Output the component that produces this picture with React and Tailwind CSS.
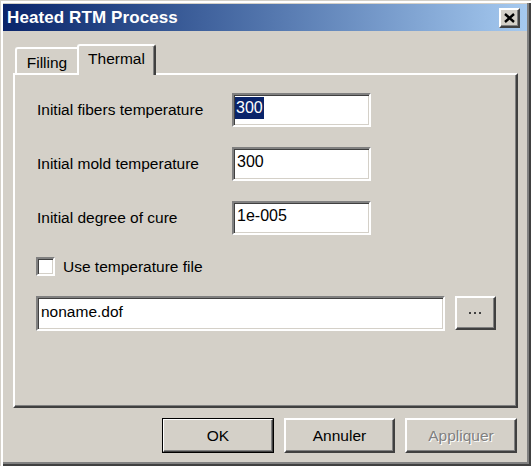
import React, { useState } from "react";

const raised =
  "border-2 border-t-white border-l-white border-r-[#404040] border-b-[#404040] shadow-[inset_-1px_-1px_0_0_#808080]";
const sunken =
  "border-2 border-t-[#808080] border-l-[#808080] border-r-white border-b-white shadow-[inset_1px_1px_0_0_#404040,inset_-1px_-1px_0_0_#d4d0c8]";

const Field = ({ label, value, selected }) => (
  <div className="flex items-center h-[34px]">
    <div className="w-[195px] pl-[22px] box-content text-[15.5px]">{label}</div>
    <div className={`${sunken} bg-white w-[139px] h-[34px] flex items-start pt-[2px] pl-[1px]`}>
      {selected ? (
        <span className="bg-[#0a246a] text-white leading-[22px] px-[1px]">{value}</span>
      ) : (
        <span className="leading-[22px] px-[2px]">{value}</span>
      )}
    </div>
  </div>
);

const Button = ({ children, isDefault, disabled, width = "w-[112px]" }) => (
  <button
    type="button"
    disabled={disabled}
    className={`${width} h-[35px] bg-[#d4d0c8] flex items-center justify-center text-[15.5px] ${
      isDefault ? "outline outline-1 outline-black -outline-offset-1" : ""
    } ${raised}`}
  >
    <span
      className={
        disabled
          ? "text-[#808080] [text-shadow:1px_1px_0_#ffffff]"
          : "text-black"
      }
    >
      {children}
    </span>
  </button>
);

export default function App() {
  const [useFile, setUseFile] = useState(false);

  return (
    <div
      className="w-[531px] h-[466px] bg-[#d4d0c8] flex flex-col pt-[4px] pl-[3px] pr-[4px] pb-[4px] text-black shadow-[inset_1px_1px_0_0_#d4d0c8,inset_3px_3px_0_0_#ffffff,inset_-2px_-2px_0_0_#404040,inset_-4px_-4px_0_0_#808080]"
      style={{ fontFamily: '"Liberation Sans", Arial, sans-serif' }}
    >
      {/* title bar */}
      <div className="h-[27px] flex items-center justify-between pl-[4px] pr-[7px] bg-gradient-to-r from-[#0a246a] to-[#a6caf0]">
        <span className="text-white font-bold text-[17px] tracking-[0.1px]">Heated RTM Process</span>
        <div className={`${raised} w-[21px] h-[20px] bg-[#d4d0c8] flex items-center justify-center`}>
          <svg width="11" height="10" viewBox="0 0 11 10">
            <path d="M1 1 L10 9 M10 1 L1 9" stroke="#000" strokeWidth="2.4" />
          </svg>
        </div>
      </div>

      {/* tabs */}
      <div className="mt-[13px] ml-[10px] mr-[9px] flex flex-col">
        <div className="flex items-end h-[29px] pl-[2px]">
          <div className="w-[62px] h-[26px] border-t-2 border-l-2 border-white rounded-tl-[3px] flex items-center justify-center pt-[3px] text-[15.5px]">
            Filling
          </div>
          <div className="relative z-10 w-[79px] h-[31px] -mb-[2px] bg-[#d4d0c8] border-t-2 border-l-2 border-r-2 border-t-white border-l-white border-r-[#404040] rounded-t-[3px] flex items-start justify-center pt-[1px] text-[15.5px] shadow-[inset_-1px_0_0_0_#808080]">
            Thermal
          </div>
        </div>

        {/* panel */}
        <div className="h-[335px] border-2 border-t-white border-l-white border-r-[#404040] border-b-[#404040] shadow-[inset_-1px_-1px_0_0_#808080] pt-[18px] flex flex-col">
          <div className="flex flex-col gap-[20px]">
            <Field label="Initial fibers temperature" value="300" selected />
            <Field label="Initial mold temperature" value="300" />
            <Field label="Initial degree of cure" value="1e-005" />
          </div>

          <label className="mt-[22px] ml-[21px] flex items-center gap-[8px] h-[19px] text-[15.5px] cursor-default">
            <span
              onClick={() => setUseFile(!useFile)}
              className={`${sunken} w-[19px] h-[19px] bg-white flex items-center justify-center`}
            >
              {useFile && (
                <svg width="9" height="9" viewBox="0 0 9 9">
                  <path d="M1 4 L3.5 7 L8 1" stroke="#000" strokeWidth="2" fill="none" />
                </svg>
              )}
            </span>
            Use temperature file
          </label>

          <div className="mt-[20px] ml-[21px] flex items-start gap-[10px]">
            <div className={`${sunken} bg-white w-[409px] h-[35px] pt-[3px] pl-[3px] text-[15.5px] leading-[22px]`}>
              noname.dof
            </div>
            <button
              type="button"
              className={`${raised} w-[41px] h-[34px] bg-[#d4d0c8] flex items-center justify-center`}
            >
              <svg width="13" height="3" viewBox="0 0 13 3">
                <rect x="0" y="0" width="2" height="2" fill="#404040" />
                <rect x="5" y="0" width="2" height="2" fill="#404040" />
                <rect x="10" y="0" width="2" height="2" fill="#404040" />
              </svg>
            </button>
          </div>
        </div>
      </div>

      {/* buttons */}
      <div className="mt-[10px] pr-[10px] flex justify-end gap-[10px]">
        <Button isDefault>OK</Button>
        <Button width="w-[111px]">Annuler</Button>
        <Button disabled>Appliquer</Button>
      </div>
    </div>
  );
}
